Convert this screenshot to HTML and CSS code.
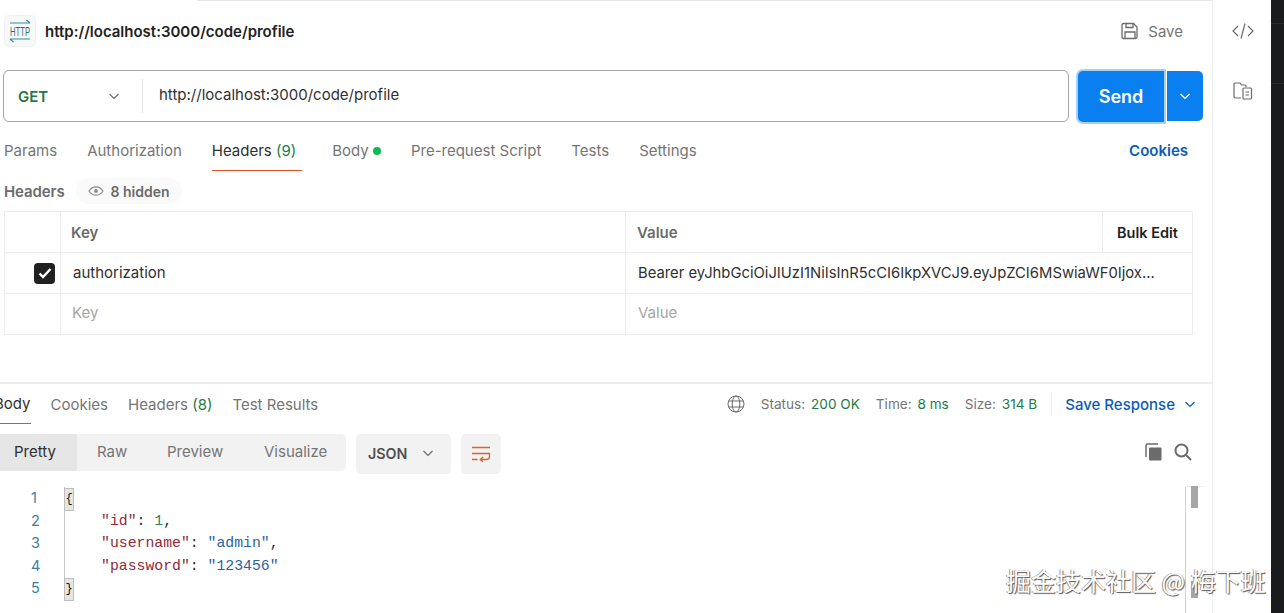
FILE: index.html
```html
<!DOCTYPE html>
<html lang="en">
<head>
<meta charset="utf-8">
<title>Postman request</title>
<link rel="stylesheet" href="styles.css">
</head>
<body>
<div class="app">
  <main class="main">
    <div class="topline"></div>
    <header class="title-row">
      <div class="http-badge">
        <svg width="30" height="30" viewBox="0 0 30 30" fill="none" stroke="#2f8f9a" stroke-width="1.200">
          <path d="M5 7h20M21.500 4l3.500 3M5 23h20M5 23l3.500 3"/>
          <text class="http-text" x="15" y="19.500" text-anchor="middle" textLength="20" lengthAdjust="spacingAndGlyphs">HTTP</text>
        </svg>
      </div>
      <h1 class="req-name">http://localhost:3000/code/profile</h1>
      <button class="save">
        <svg width="20" height="20" viewBox="0 0 20 20" fill="none" stroke="#6b6b6b" stroke-width="1.300"><path d="M3.500 2.500h10l3.500 3.500v10a1.500 1.500 0 0 1-1.500 1.500h-12a1.500 1.500 0 0 1-1.500-1.500v-12a1.500 1.500 0 0 1 1.500-1.500z"/><path d="M6 2.500v4h7v-4M5 17.500v-6.500h10v6.500"/></svg>
        <span>Save</span>
      </button>
    </header>

    <section class="url-row">
      <div class="url-box">
        <div class="method"><span>GET</span>
          <svg class="chev" width="12" height="12" viewBox="0 0 12 12"><path d="M1.500 4l4.500 4.500L10.500 4" fill="none" stroke="#6b6b6b" stroke-width="1.200"/></svg>
        </div>
        <div class="url-text">http://localhost:3000/code/profile</div>
      </div>
      <div class="send-group">
        <button class="send">Send</button>
        <button class="send-more"><svg width="12" height="12" viewBox="0 0 12 12"><path d="M1.500 4l4.500 4.500L10.500 4" fill="none" stroke="#fff" stroke-width="1.200"/></svg></button>
      </div>
    </section>

    <nav class="req-tabs">
      <a class="tab">Params</a>
      <a class="tab">Authorization</a>
      <a class="tab active">Headers <span class="count">(9)</span></a>
      <a class="tab">Body <i class="dot"></i></a>
      <a class="tab">Pre-request Script</a>
      <a class="tab">Tests</a>
      <a class="tab">Settings</a>
      <a class="cookies">Cookies</a>
    </nav>

    <div class="headers-label">
      <span class="hl-title">Headers</span>
      <span class="hidden-pill">
        <svg width="16" height="10" viewBox="0 0 16 10"><path d="M1 5c2-3 4.500-4.200 7-4.200S13 2 15 5c-2 3-4.500 4.200-7 4.200S3 8 1 5z" fill="none" stroke="#8e8e8e" stroke-width="1.300"/><circle cx="8" cy="5" r="2" fill="#8e8e8e"/></svg>
        8 hidden
      </span>
    </div>

    <div class="kv-table">
      <div class="kv-row head">
        <div class="c-check"></div>
        <div class="c-key">Key</div>
        <div class="c-val">Value</div>
        <div class="c-bulk">Bulk Edit</div>
      </div>
      <div class="kv-row">
        <div class="c-check"><span class="checkbox"><svg width="14" height="12" viewBox="0 0 14 12"><path d="M1.500 6.500l3.500 3.500L12.500 2" fill="none" stroke="#fff" stroke-width="2.400"/></svg></span></div>
        <div class="c-key data">authorization</div>
        <div class="c-val data wide">Bearer eyJhbGciOiJIUzI1NiIsInR5cCI6IkpXVCJ9.eyJpZCI6MSwiaWF0Ijox...</div>
      </div>
      <div class="kv-row">
        <div class="c-check"></div>
        <div class="c-key ph">Key</div>
        <div class="c-val ph wide">Value</div>
      </div>
    </div>

    <section class="response">
      <div class="res-tabs">
        <a class="rtab active first">Body</a>
        <a class="rtab">Cookies</a>
        <a class="rtab">Headers <span class="count">(8)</span></a>
        <a class="rtab">Test Results</a>
        <div class="res-meta">
          <svg class="globe" width="18" height="18" viewBox="0 0 18 18" fill="none" stroke="#6b6b6b" stroke-width="1"><circle cx="9" cy="9" r="8"/><ellipse cx="9" cy="9" rx="3.800" ry="8"/><path d="M1.800 6h14.400M1.800 12h14.400"/></svg>
          <span class="stat">Status: <b>200 OK</b></span>
          <span class="stat">Time: <b>8 ms</b></span>
          <span class="stat">Size: <b>314 B</b></span>
          <span class="sep"></span>
          <a class="save-res">Save Response
            <svg width="12" height="12" viewBox="0 0 12 12"><path d="M1.500 4l4.500 4.500L10.500 4" fill="none" stroke="#0b5cb5" stroke-width="1.200"/></svg>
          </a>
        </div>
      </div>

      <div class="toolbar">
        <div class="modes">
          <span class="mode on">Pretty</span>
          <span class="mode">Raw</span>
          <span class="mode">Preview</span>
          <span class="mode">Visualize</span>
        </div>
        <div class="format">JSON
          <svg width="12" height="12" viewBox="0 0 12 12"><path d="M1.500 4l4.500 4.500L10.500 4" fill="none" stroke="#6b6b6b" stroke-width="1.200"/></svg>
        </div>
        <div class="wrap">
          <svg width="20" height="16" viewBox="0 0 20 16" fill="none" stroke="#d9622b" stroke-width="1.300"><path d="M1 1.500h18M1 7.500h18M1 13.500h5.500M18.500 7.500v3a3 3 0 0 1-3 3H9.500M12 11l-2.700 2.500L12 16"/></svg>
        </div>
        <div class="tools">
          <svg width="18" height="18" viewBox="0 0 18 18"><rect x="5" y="4.500" width="12.500" height="13" rx="1" fill="#6b6b6b"/><path d="M2 14V2.500A1.500 1.500 0 0 1 3.500 1H14" fill="none" stroke="#6b6b6b" stroke-width="1.500"/></svg>
          <svg width="18" height="18" viewBox="0 0 18 18" fill="none" stroke="#6b6b6b" stroke-width="2"><circle cx="7.500" cy="7.500" r="6"/><path d="M12 12l5 5"/></svg>
        </div>
      </div>

      <div class="code">
        <div class="gutter"><div>1</div><div>2</div><div>3</div><div>4</div><div>5</div></div>
        <div class="lines">
          <div class="line"><span class="brace">{</span></div>
          <div class="line in"><span class="k">"id"</span>: <span class="n">1</span>,</div>
          <div class="line in"><span class="k">"username"</span>: <span class="s">"admin"</span>,</div>
          <div class="line in"><span class="k">"password"</span>: <span class="s">"123456"</span></div>
          <div class="line"><span class="brace">}</span></div>
        </div>
        <div class="scroll"><i class="thumb"></i><i class="mark"></i></div>
      </div>
    </section>
  </main>

  <aside class="side">
    <svg width="22" height="18" viewBox="0 0 22 18" fill="none" stroke="#6b6b6b" stroke-width="1.200"><path d="M6 4L1 9l5 5M16 4l5 5-5 5M13 1.500L9 16.500"/></svg>
    <svg width="20" height="20" viewBox="0 0 20 20" fill="none" stroke="#6b6b6b" stroke-width="1.200"><path d="M8 17H2.500A1.500 1.500 0 0 1 1 15.500V3a1 1 0 0 1 1-1h5l1.500 2H12a1 1 0 0 1 1 1v1"/><rect x="10" y="7" width="8.500" height="11" rx="1"/><path d="M12.500 11h3.500M12.500 14h3.500"/></svg>
  </aside>
  <div class="edge"><i></i><i></i></div>
</div>
<div class="watermark">掘金技术社区 @ 梅下班</div>
</body>
</html>
```

FILE: styles.css
```css
* { box-sizing: border-box; }
html, body { margin: 0; height: 613px; overflow: hidden; background: #fff; }
body { font-family: Inter, "Liberation Sans", sans-serif; font-size: 15px; color: #6b6b6b; position: relative; }
button { font-family: inherit; border: 0; background: none; padding: 0; }

.app { display: flex; height: 613px; }
.main { width: 1212px; flex: none; overflow: hidden; }
.side { width: 59px; flex: none; border-left: 1px solid #ededed; display: flex; flex-direction: column; align-items: center; gap: 41px; padding: 22px 0 0 2px; background: #fff; }
.edge { flex: 1; background: #1a1b1d; display: flex; flex-direction: column; gap: 59px; padding-top: 23px; }
.edge i { display: block; height: 1px; background: #2b2c2f; }

.topline { height: 1px; margin-left: 197px; background: #e6e6e6; }

.title-row { display: flex; align-items: center; height: 60px; padding: 0 29px 0 4px; }
.http-badge { width: 32px; height: 32px; flex: none; border-radius: 5px; background: #f7f8f8; border: 1px solid #f0f0f0; display: flex; align-items: center; justify-content: center; }
.http-text { font-family: "Liberation Sans", sans-serif; font-size: 12px; fill: #1f6f86; stroke: none; }
.req-name { margin: 0 0 0 9px; font-size: 15px; font-weight: 600; color: #212121; flex: 1; }
.save { display: flex; align-items: center; gap: 8px; font-size: 15px; color: #757575; }

.url-row { display: flex; align-items: stretch; height: 52px; margin: 9px 9px 0 3px; }
.url-box { flex: 1; display: flex; align-items: center; border: 1px solid #a6a6a6; border-radius: 6px; height: 52px; }
.method { width: 139px; height: 34px; border-right: 1px solid #e6e6e6; display: flex; align-items: center; justify-content: space-between; padding: 0 22px 0 14px; font-weight: 600; color: #1e7a46; }
.url-text { padding: 0 0 3px 16px; color: #303030; }
.send-group { display: flex; margin-left: 9px; }
.send { width: 86px; height: 51px; margin-top: 1px; background: #0a7ff0; color: #fff; font-weight: 600; font-size: 18px; border-radius: 5px 0 0 5px; box-shadow: 0 0 0 2px #a6d0fa; }
.send-more { width: 36px; height: 50px; margin: 1px 0 0 3px; background: #0a7ff0; border-radius: 0 5px 5px 0; display: flex; align-items: center; justify-content: center; }

.req-tabs { display: flex; align-items: stretch; height: 40px; margin-top: 9px; padding: 0 24px 0 4px; gap: 30px; }
.tab { display: flex; align-items: center; height: 40px; padding-bottom: 1px; color: #757575; white-space: pre; }
.tab.active { color: #303030; border-bottom: 1px solid #e05320; padding-right: 6px; }
.count { color: #1e7a46; }
.dot { width: 8px; height: 8px; border-radius: 50%; background: #0cbb52; display: inline-block; }
.cookies { margin-left: auto; align-self: center; color: #0b5cb5; font-weight: 600; padding-bottom: 1px; }

.headers-label { display: flex; align-items: center; height: 40px; padding-left: 4px; }
.hl-title { font-weight: 600; color: #6b6b6b; letter-spacing: -0.1px; }
.hidden-pill { display: flex; align-items: center; gap: 7px; margin-left: 11px; height: 26px; padding: 0 12px; border-radius: 13px; background: #fafafa; font-weight: 600; font-size: 14px; color: #6b6b6b; }

.kv-table { margin-left: 4px; width: 1189px; border: 1px solid #ededed; }
.kv-row { display: flex; height: 41px; border-bottom: 1px solid #ededed; align-items: stretch; }
.kv-row.head { font-weight: 600; color: #6b6b6b; }
.kv-row:last-child { border-bottom: 0; height: 40px; }
.c-check { width: 56px; flex: none; border-right: 1px solid #ededed; display: flex; align-items: center; justify-content: flex-end; padding-right: 5px; }
.c-key { width: 565px; flex: none; border-right: 1px solid #ededed; display: flex; align-items: center; padding-left: 10px; }
.c-val { width: 476px; flex: none; display: flex; align-items: center; padding-left: 11px; white-space: nowrap; }
.c-val.wide { width: 566px; }
.c-bulk { flex: 1; border-left: 1px solid #ededed; display: flex; align-items: center; justify-content: center; font-weight: 600; color: #212121; font-size: 14.500px; }
.data { color: #303030; padding-left: 11px; padding-bottom: 1px; }
.c-key.data { padding-left: 12px; }
.c-val.data { padding-left: 12px; font-size: 14.800px; }
.ph { color: #a6a6a6; padding-left: 11px; padding-bottom: 3px; }
.c-val.ph { padding-left: 12px; }
.checkbox { width: 21px; height: 21px; border-radius: 4px; background: #212121; display: flex; align-items: center; justify-content: center; }

.response { margin-top: 47px; border-top: 2px solid #ededed; }
.res-tabs { display: flex; align-items: stretch; height: 40px; gap: 20px; padding-right: 16px; }
.rtab { display: flex; align-items: center; color: #757575; white-space: pre; }
.rtab.active { color: #303030; border-bottom: 1px solid #e05320; }
.rtab.first { margin-left: -6px; }
.res-meta { margin-left: auto; display: flex; align-items: center; font-size: 13.600px; padding-bottom: 1px; }
.globe { margin-right: 16px; }
.stat { margin-right: 16px; color: #757575; }
.stat b { font-weight: 400; color: #1e7a46; margin-left: 2px; }
.sep { width: 1px; height: 24px; background: #ededed; margin-right: 13px; margin-left: -2px; }
.save-res { display: flex; align-items: center; gap: 9px; color: #0b5cb5; font-weight: 500; font-size: 15px; padding-top: 1px; }

.toolbar { display: flex; align-items: flex-start; height: 46px; margin-top: 10px; }
.modes { display: flex; height: 37px; width: 346px; background: #f2f2f2; border-radius: 0 5px 5px 0; }
.mode { display: flex; align-items: center; color: #757575; padding-left: 20px; padding-bottom: 3px; }
.mode:nth-child(2) { width: 70px; }
.mode:nth-child(3) { width: 97px; }
.mode:nth-child(4) { width: 102px; }
.mode.on { width: 77px; padding-left: 14px; background: #e6e6e6; color: #303030; }
.format { display: flex; align-items: center; justify-content: space-between; width: 95px; height: 40px; margin-left: 10px; padding: 0 17px 2px 12px; background: #f2f2f2; border-radius: 5px; font-weight: 600; font-size: 14.300px; color: #505050; }
.wrap { width: 40px; height: 40px; margin-left: 10px; background: #f2f2f2; border-radius: 5px; display: flex; align-items: center; justify-content: center; }
.tools { margin-left: auto; display: flex; gap: 12px; padding: 9px 20px 0 0; }

.code { display: flex; position: relative; font-family: "Liberation Mono", monospace; font-size: 14.800px; line-height: 22.500px; margin-top: 7px; }
.gutter { width: 63px; flex: none; padding-left: 31px; color: #3c7f9d; font-family: Inter, sans-serif; font-size: 14.500px; }
.lines { flex: 1; border-left: 1px solid #c8c8c8; margin-left: 1px; height: 112px; }
.line { height: 22.500px; color: #303030; white-space: pre; }
.line.in { padding-left: 36px; }
.brace { display: inline-block; width: 8px; height: 21px; background: #e4e6df; outline: 1px solid #bdbdbd; font-size: 12px; line-height: 21px; color: #111; text-align: center; }
.k { color: #8f2a3a; }
.n { color: #2f7d5f; }
.s { color: #2d5f9e; }
.scroll { position: absolute; left: 1185px; top: -1px; width: 20px; height: 130px; border-left: 1px solid #d0d0d0; border-top: 1px solid #eee; }
.scroll .thumb { position: absolute; left: 5px; top: -1px; width: 7px; height: 22px; background: #a6a6a6; }
.scroll .mark { position: absolute; left: 5px; top: 94px; width: 7px; height: 17px; background: #a6a6a6; }

.watermark { position: absolute; left: 1006px; top: 562px; font-family: "Noto Sans CJK SC", sans-serif; font-size: 25px; line-height: 36px; color: #fff; white-space: nowrap; text-shadow: 1px 1px 1px #555, -1px 0 0 #999; }
```
